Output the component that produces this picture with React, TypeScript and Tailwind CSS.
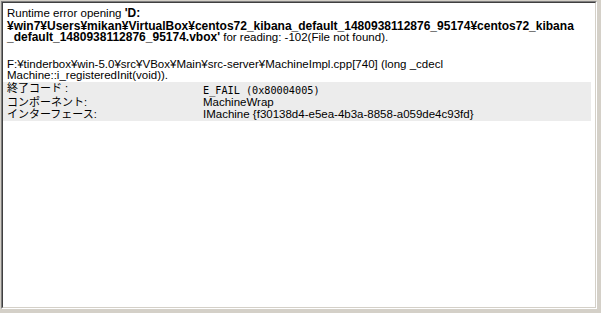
export default function App() {
  const sans = "font-['Liberation_Sans','Noto_Sans_CJK_JP',sans-serif]";
  return (
    <div className="w-[601px] h-[313px] bg-[#d4d0c8] pt-px pl-px">
      <div className="w-[596px] h-[308px] border border-t-[#808080] border-l-[#808080] border-b-white border-r-white">
        <div className={`h-full w-full bg-white border border-t-[#404040] border-l-[#404040] border-b-[#d4d0c8] border-r-[#d4d0c8] text-black ${sans}`}>
          <div className="pl-[4px] pt-[5px] text-[11.5px]">
            <div className="leading-[11px] h-[11px] whitespace-nowrap">
              Runtime error opening <b className="text-[12px] leading-[11px]">'D:</b>
            </div>
            <div className="leading-[12px] h-[12px] mt-[1px] whitespace-nowrap font-bold text-[12px]">
              ¥win7¥Users¥mikan¥VirtualBox¥centos72_kibana_default_1480938112876_95174¥centos72_kibana
            </div>
            <div className="leading-[11px] h-[11px] whitespace-nowrap">
              <b className="text-[12px] leading-[11px]">_default_1480938112876_95174.vbox'</b> for reading: -102(File not found).
            </div>
            <div className="leading-[11px] h-[11px] whitespace-nowrap mt-[16px]">
              F:¥tinderbox¥win-5.0¥src¥VBox¥Main¥src-server¥MachineImpl.cpp[740] (long _cdecl
            </div>
            <div className="leading-[11px] h-[11px] whitespace-nowrap">
              Machine::i_registeredInit(void)).
            </div>
          </div>
          <div className="mt-[1px] mr-[4px] bg-[#ececec] text-[11.5px]">
            <div className="flex h-[14px]">
              <div className="w-[200px] pl-[4px] leading-[11px] pt-[1px] text-[11px]">終了コード :</div>
              <div className="font-['DejaVu_Sans_Mono',monospace] text-[10.2px] leading-[11px] pt-[3px] whitespace-nowrap">
                E_FAIL (0x80004005)
              </div>
            </div>
            <div className="flex h-[12px]">
              <div className="w-[200px] pl-[4px] leading-[12px] text-[11px]">コンポーネント:</div>
              <div className="leading-[12px] whitespace-nowrap">MachineWrap</div>
            </div>
            <div className="flex h-[13px]">
              <div className="w-[200px] pl-[4px] leading-[12px] text-[11px]">インターフェース:</div>
              <div className="leading-[12px] whitespace-nowrap">IMachine {"{f30138d4-e5ea-4b3a-8858-a059de4c93fd}"}</div>
            </div>
          </div>
        </div>
      </div>
    </div>
  );
}
